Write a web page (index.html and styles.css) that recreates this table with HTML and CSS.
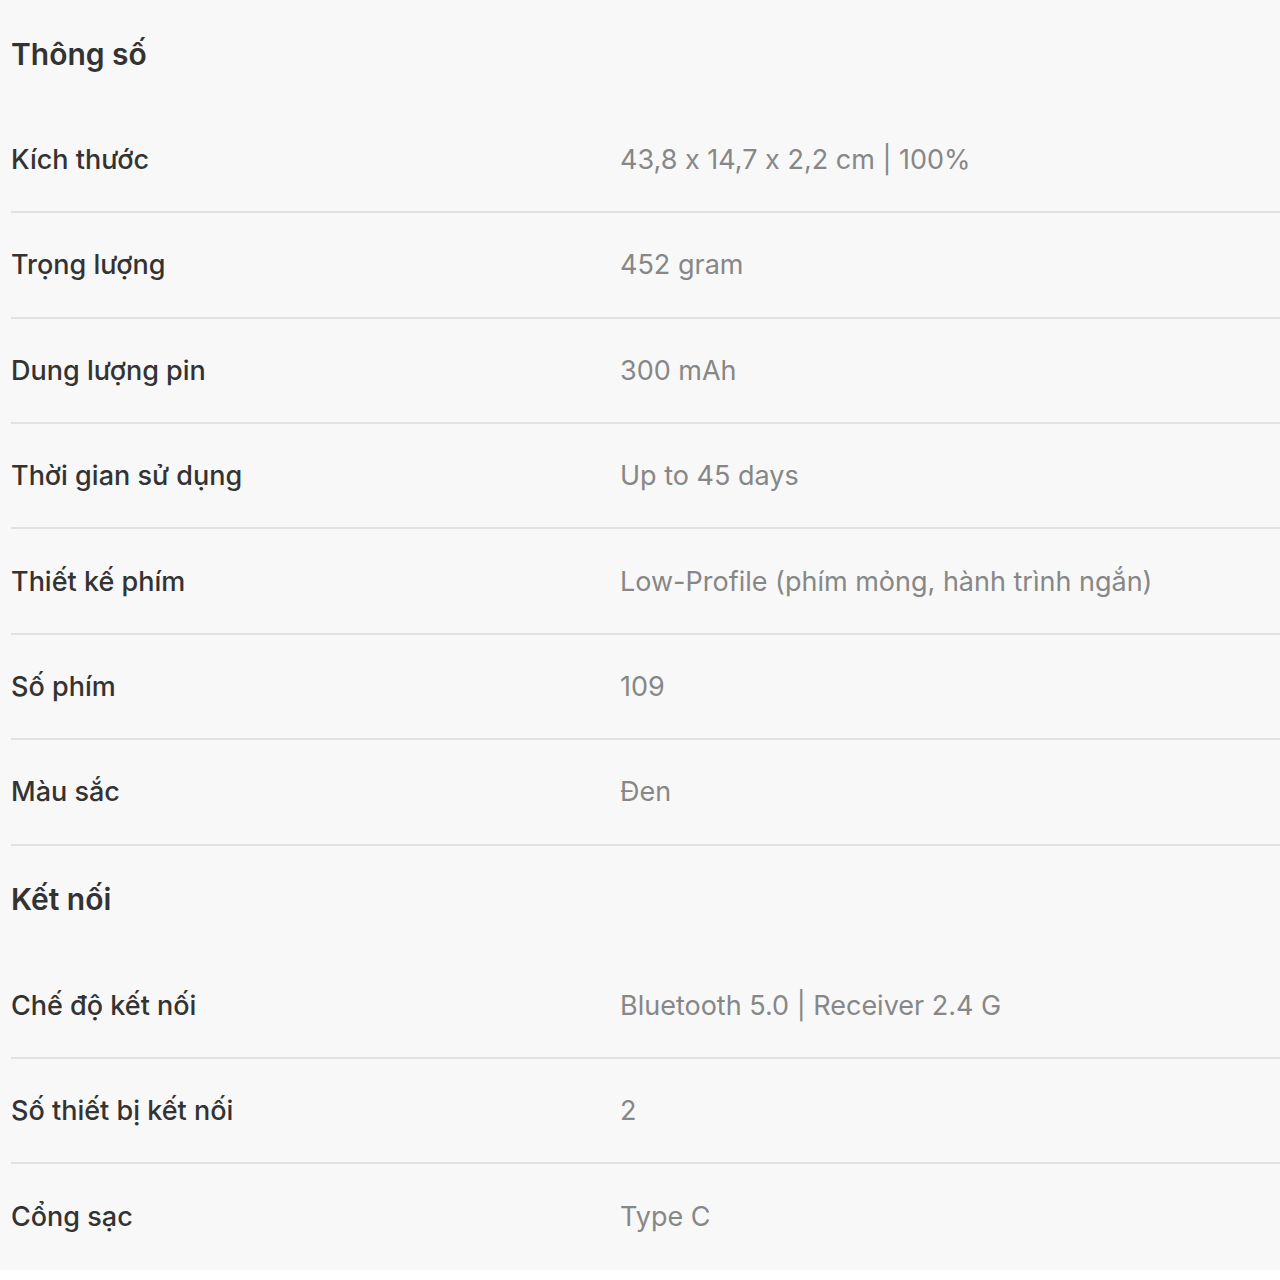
FILE: index.html
```html
<!DOCTYPE html>
<html lang="vi">
<head>
    <meta charset="UTF-8">
    <title>Thông số</title>
    <link rel="stylesheet" href="styles.css">
</head>
<body>
    <div class="specs">
        <h2 class="group-title">Thông số</h2>
        <div class="row"><div class="label">Kích thước</div><div class="value">43,8 x 14,7 x 2,2 cm | 100%</div></div>
        <div class="row"><div class="label">Trọng lượng</div><div class="value">452 gram</div></div>
        <div class="row"><div class="label">Dung lượng pin</div><div class="value">300 mAh</div></div>
        <div class="row"><div class="label">Thời gian sử dụng</div><div class="value">Up to 45 days</div></div>
        <div class="row"><div class="label">Thiết kế phím</div><div class="value">Low-Profile (phím mỏng, hành trình ngắn)</div></div>
        <div class="row"><div class="label">Số phím</div><div class="value">109</div></div>
        <div class="row"><div class="label">Màu sắc</div><div class="value">Đen</div></div>

        <h2 class="group-title">Kết nối</h2>
        <div class="row"><div class="label">Chế độ kết nối</div><div class="value">Bluetooth 5.0 | Receiver 2.4 G</div></div>
        <div class="row"><div class="label">Số thiết bị kết nối</div><div class="value">2</div></div>
        <div class="row last"><div class="label">Cổng sạc</div><div class="value">Type C</div></div>
    </div>
</body>
</html>
```

FILE: styles.css
```css
body {
    margin: 0;
    background: #ffffff;
    font-family: 'Inter', 'Open Sans', sans-serif;
    font-feature-settings: "calt" 0;
}

.specs {
    background: #f8f8f8;
    padding-left: 11px;
}

.group-title {
    margin: 0;
    height: 107.8px;
    display: flex;
    align-items: center;
    font-size: 30px;
    font-weight: 600;
    color: #333333;
}

.row {
    display: grid;
    grid-template-columns: 609px 1fr;
    align-items: center;
    height: 103.4px;
    border-bottom: 2px solid #e2e2e2;
    font-size: 27px;
}

.row.last {
    height: 105.4px;
    border-bottom: none;
}

.label {
    color: #333333;
    font-weight: 500;
}

.value {
    color: #878787;
}
```
